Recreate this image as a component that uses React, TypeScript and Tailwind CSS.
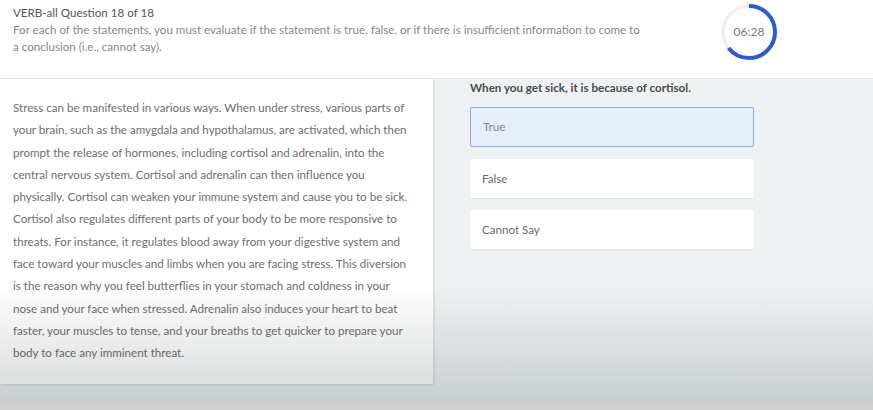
import React from 'react';

const passage = [
  'Stress can be manifested in various ways. When under stress, various parts of',
  'your brain, such as the amygdala and hypothalamus, are activated, which then',
  'prompt the release of hormones, including cortisol and adrenalin, into the',
  'central nervous system. Cortisol and adrenalin can then influence you',
  'physically. Cortisol can weaken your immune system and cause you to be sick.',
  'Cortisol also regulates different parts of your body to be more responsive to',
  'threats. For instance, it regulates blood away from your digestive system and',
  'face toward your muscles and limbs when you are facing stress. This diversion',
  'is the reason why you feel butterflies in your stomach and coldness in your',
  'nose and your face when stressed. Adrenalin also induces your heart to beat',
  'faster, your muscles to tense, and your breaths to get quicker to prepare your',
  'body to face any imminent threat.',
];

const options = ['True', 'False', 'Cannot Say'];

const Timer = ({ label, progress }: { label: string; progress: number }) => {
  const r = 26;
  const c = 2 * Math.PI * r;
  return (
    <div className="relative w-[60px] h-[60px]">
      <svg width="60" height="60" viewBox="0 0 60 60" className="-rotate-90">
        <circle cx="30" cy="30" r={r} fill="none" stroke="#f0f0f0" strokeWidth="3.5" />
        <circle
          cx="30"
          cy="30"
          r={r}
          fill="none"
          stroke="#2b5bd8"
          strokeWidth="4"
          strokeDasharray={`${c * progress} ${c}`}
        />
      </svg>
      <span className="absolute inset-0 flex items-center justify-center text-[12px] text-[#7a7a7a]">{label}</span>
    </div>
  );
};

export default function App() {
  const selected = 'True';

  return (
    <div className="relative w-[873px] h-[410px] overflow-hidden bg-[#eef2f3] font-['Lato',sans-serif]">
      {/* header */}
      <div className="h-[79px] bg-white border-b border-[#e4e8ea] flex items-start justify-between pl-[13px]">
        <div className="pt-[4px] text-[11.6px] leading-[17px]">
          <div className="text-[#555]">VERB-all Question 18 of 18</div>
          <div className="text-[#888]">
            For each of the statements, you must evaluate if the statement is true, false, or if there is insufficient information to come to
            <br />
            a conclusion (i.e., cannot say).
          </div>
        </div>
        <div className="mr-[94px] mt-[2px]">
          <Timer label="06:28" progress={0.64} />
        </div>
      </div>

      <div className="flex">
        {/* passage */}
        <div className="w-[433px] h-[305px] bg-white shadow-[1px_1px_3px_rgba(0,0,0,0.12)] pl-[13px] pt-[18px] text-[11.6px] leading-[22.3px] text-[#6e6e6e] whitespace-nowrap">
          {passage.map((line) => (
            <div key={line}>{line}</div>
          ))}
        </div>

        {/* question */}
        <div className="pl-[37px]">
          <div className="text-[11.6px] leading-[17px] font-bold text-[#4a4a4a]">When you get sick, it is because of cortisol.</div>
          <div className="mt-[11px] flex flex-col gap-[12px] w-[284px]">
            {options.map((opt) =>
              opt === selected ? (
                <div
                  key={opt}
                  className="h-[40px] flex items-center px-[12px] text-[11.6px] text-[#6f86c8] bg-[#e7eefc] border border-[#93a8e2] rounded-[2px]"
                >
                  {opt}
                </div>
              ) : (
                <div
                  key={opt}
                  className="h-[39px] flex items-center px-[12px] text-[11.6px] text-[#6a6a6a] bg-white rounded-[2px] shadow-[0_1px_2px_rgba(0,0,0,0.06)]"
                >
                  {opt}
                </div>
              )
            )}
          </div>
        </div>
      </div>

      {/* video player shade */}
      <div className="pointer-events-none absolute left-0 right-0 top-[285px] h-[118px] bg-gradient-to-b from-transparent to-[rgba(30,40,45,0.18)]" />
      <div className="absolute left-0 right-0 bottom-0 h-[7px] bg-[#d0d0d0]" />
    </div>
  );
}
